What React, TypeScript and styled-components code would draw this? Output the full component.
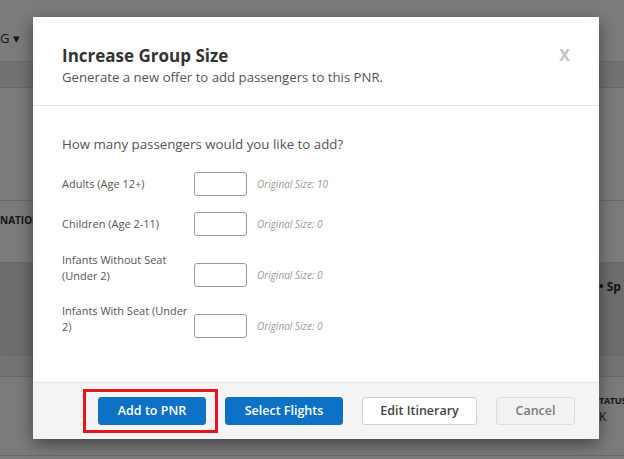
import styled, { createGlobalStyle } from 'styled-components'
import { FC } from 'react'

const GlobalStyle = createGlobalStyle`
  html, body {
    margin: 0;
    padding: 0;
    overflow: hidden;
  }
  body {
    font-family: 'Open Sans', 'Liberation Sans', sans-serif;
    background: #f7f7f7;
  }
`

const Page = styled.div`
  position: relative;
  width: 624px;
  height: 459px;
  overflow: hidden;
  background: #f7f7f7;
  color: #333;
`

const TopNav = styled.div`
  height: 62px;
  display: flex;
  align-items: flex-end;
  padding-bottom: 14px;
  box-sizing: border-box;
  font-size: 13px;
  color: #2a2a2a;
  border-bottom: 1px solid #d6d6d6;
`

const SubBar = styled.div`
  height: 25px;
  background: #e4e4e4;
  border-bottom: 1px solid #d2d2d2;
`

const Spacer = styled.div<{ $h: number }>`
  height: ${({ $h }) => $h}px;
`

const TableRow = styled.div<{ $h: number; $bg?: string }>`
  height: ${({ $h }) => $h}px;
  box-sizing: border-box;
  display: flex;
  justify-content: space-between;
  align-items: flex-start;
  background: ${({ $bg }) => $bg || 'transparent'};
  border-top: 1px solid #d2d2d2;
`

const HeadCell = styled.div<{ $top: number }>`
  padding-top: ${({ $top }) => $top}px;
  font-size: 10px;
  font-weight: 700;
  color: #2a2a2a;
  white-space: nowrap;
`

const StatusHead = styled.div`
  font-size: 9px;
  font-weight: 700;
  letter-spacing: -0.3px;
  color: #2a2a2a;
  line-height: 14px;
`

const RightCell = styled.div<{ $top: number }>`
  width: 25px;
  overflow: hidden;
  padding-top: ${({ $top }) => $top}px;
  white-space: nowrap;
  font-size: 12px;
  color: #2a2a2a;
  line-height: 17px;
`

const Backdrop = styled.div`
  position: absolute;
  inset: 0;
  background: rgba(0, 0, 0, 0.5);
`

const Modal = styled.div`
  position: absolute;
  left: 33px;
  top: 17px;
  width: 566px;
  height: 422px;
  background: #fff;
  display: flex;
  flex-direction: column;
  box-shadow: 0 5px 15px rgba(0, 0, 0, 0.45);
`

const Header = styled.div`
  display: flex;
  justify-content: space-between;
  align-items: flex-start;
  padding: 28px 29px 18px 29px;
  border-bottom: 1px solid #e3e3e3;
`

const Title = styled.h2`
  margin: 0;
  font-size: 17px;
  line-height: 22px;
  font-weight: 700;
  color: #333;
`

const Subtitle = styled.p`
  margin: 0;
  font-size: 13.2px;
  line-height: 20px;
  color: #555;
`

const Close = styled.span`
  margin-top: 1px;
  font-size: 16px;
  font-weight: 700;
  color: #c2c2c2;
  line-height: 18px;
`

const Body = styled.div`
  flex: 1;
  padding: 28px 29px 0 29px;
`

const Question = styled.p`
  margin: 0 0 18px 0;
  font-size: 13.3px;
  line-height: 20px;
  color: #555;
`

const Rows = styled.div`
  display: flex;
  flex-direction: column;
  gap: 16px;
`

const Row = styled.div<{ $multi?: boolean }>`
  display: flex;
  align-items: ${({ $multi }) => ($multi ? 'flex-start' : 'center')};
`

const Label = styled.label`
  width: 132px;
  font-size: 11px;
  line-height: 16px;
  color: #555;
`

const Field = styled.div<{ $multi?: boolean }>`
  display: flex;
  align-items: center;
  margin-top: ${({ $multi }) => ($multi ? '11px' : '0')};
`

const Input = styled.input`
  width: 53px;
  height: 24px;
  box-sizing: border-box;
  border: 1px solid #9a9a9a;
  border-radius: 3px;
  padding: 0 4px;
  margin: 0;
`

const Note = styled.span`
  margin-left: 10px;
  font-size: 10px;
  font-style: italic;
  color: #9a9a9a;
`

const Footer = styled.div`
  height: 57px;
  box-sizing: border-box;
  display: flex;
  justify-content: flex-end;
  align-items: center;
  gap: 19px;
  padding: 0 24px 1px 0;
  background: #f4f4f4;
  border-top: 1px solid #e6e6e6;
`

const Button = styled.button<{ $w: number; $variant: 'primary' | 'default' | 'muted'; $marked?: boolean }>`
  position: relative;
  width: ${({ $w }) => $w}px;
  height: 28px;
  border-radius: 3px;
  font-family: 'Open Sans', 'Liberation Sans', sans-serif;
  font-size: 12.5px;
  font-weight: 600;
  cursor: pointer;
  background: ${({ $variant }) =>
    $variant === 'primary' ? '#0d72c6' : $variant === 'muted' ? '#f2f2f2' : '#fff'};
  color: ${({ $variant }) =>
    $variant === 'primary' ? '#fff' : $variant === 'muted' ? '#7a7a7a' : '#444'};
  border: 1px solid
    ${({ $variant }) =>
      $variant === 'primary' ? '#0d72c6' : $variant === 'muted' ? '#dcdcdc' : '#cfcfcf'};
  ${({ $marked }) =>
    $marked &&
    `
    &::after {
      content: '';
      position: absolute;
      left: -16px;
      right: -13px;
      top: -9px;
      bottom: -9px;
      border: 3px solid #e3151d;
    }
  `}
`

type Passenger = { label: string; original: number; multi?: boolean }

const passengers: Passenger[] = [
  { label: 'Adults (Age 12+)', original: 10 },
  { label: 'Children (Age 2-11)', original: 0 },
  { label: 'Infants Without Seat (Under 2)', original: 0, multi: true },
  { label: 'Infants With Seat (Under 2)', original: 0, multi: true },
]

const PassengerRow: FC<Passenger> = ({ label, original, multi }) => (
  <Row $multi={multi}>
    <Label>{label}</Label>
    <Field $multi={multi}>
      <Input type="text" />
      <Note>Original Size: {original}</Note>
    </Field>
  </Row>
)

export default function App() {
  return (
    <>
      <GlobalStyle />
      <Page>
        <TopNav>G ▾</TopNav>
        <SubBar />
        <Spacer $h={112} />
        <TableRow $h={62}>
          <HeadCell $top={12}>NATION</HeadCell>
        </TableRow>
        <TableRow $h={93} $bg="#dadada">
          <span />
          <RightCell $top={15}>
            <b>• Sp</b>
          </RightCell>
        </TableRow>
        <TableRow $h={21} $bg="#e8e8e8" />
        <TableRow $h={79}>
          <span />
          <RightCell $top={17}>
            <StatusHead>TATUS</StatusHead>K
          </RightCell>
        </TableRow>
        <TableRow $h={4} />
        <Backdrop />
        <Modal>
          <Header>
            <div>
              <Title>Increase Group Size</Title>
              <Subtitle>Generate a new offer to add passengers to this PNR.</Subtitle>
            </div>
            <Close>X</Close>
          </Header>
          <Body>
            <Question>How many passengers would you like to add?</Question>
            <Rows>
              {passengers.map((p) => (
                <PassengerRow key={p.label} {...p} />
              ))}
            </Rows>
          </Body>
          <Footer>
            <Button $w={108} $variant="primary" $marked>
              Add to PNR
            </Button>
            <Button $w={118} $variant="primary">
              Select Flights
            </Button>
            <Button $w={115} $variant="default">
              Edit Itinerary
            </Button>
            <Button $w={79} $variant="muted">
              Cancel
            </Button>
          </Footer>
        </Modal>
      </Page>
    </>
  )
}
